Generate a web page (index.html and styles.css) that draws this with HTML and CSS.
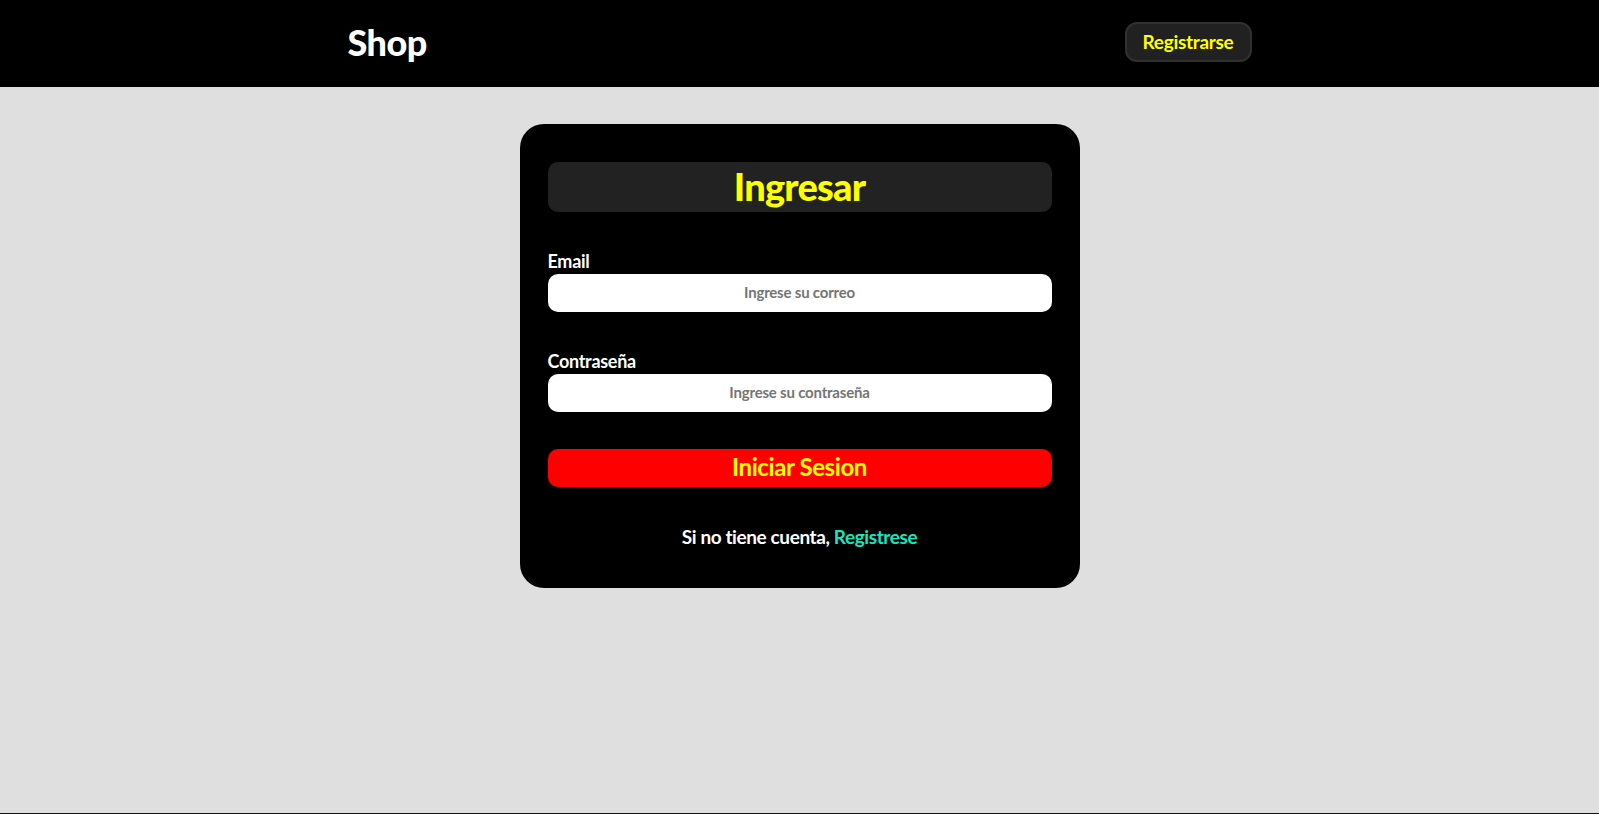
FILE: index.html
```html
<!DOCTYPE html>
<html lang="es">
<head>
<meta charset="utf-8">
<title>Shop - Ingresar</title>
<link rel="stylesheet" href="styles.css">
</head>
<body>
<header class="topbar">
  <div class="topbar-inner">
    <a class="brand" href="#">Shop</a>
    <a class="nav-btn" href="#">Registrarse</a>
  </div>
</header>
<main class="main">
  <form class="card">
    <h1 class="card-title">Ingresar</h1>
    <div class="field">
      <label class="field-label" for="email">Email</label>
      <input class="field-input" id="email" type="email" placeholder="Ingrese su correo">
    </div>
    <div class="field">
      <label class="field-label" for="pass">Contraseña</label>
      <input class="field-input" id="pass" type="password" placeholder="Ingrese su contraseña">
    </div>
    <button class="submit" type="button">Iniciar Sesion</button>
    <p class="signup">Si no tiene cuenta, <a class="signup-link" href="#">Registrese</a></p>
  </form>
</main>
<footer class="footer"></footer>
</body>
</html>
```
FILE: styles.css
```css
* { box-sizing: border-box; }
html, body { margin: 0; padding: 0; }
body {
  background: #dfdfdf;
  font-family: Lato, "Noto Sans", "Liberation Sans", sans-serif;
  font-weight: 700;
}
.topbar {
  background: #000;
  height: 87px;
  padding-bottom: 3px;
}
.topbar-inner {
  width: 904px;
  margin: 0 auto;
  height: 100%;
  display: flex;
  align-items: center;
  justify-content: space-between;
}
.brand {
  color: #fff;
  text-decoration: none;
  font-size: 36px;
  font-weight: 900;
  letter-spacing: -0.5px;
  line-height: 1;
}
.nav-btn {
  display: flex;
  align-items: center;
  justify-content: center;
  width: 127px;
  height: 40px;
  background: #212121;
  border: 2px solid #303030;
  border-radius: 12px;
  color: #ffff00;
  text-decoration: none;
  font-size: 19px;
  font-weight: 700;
  letter-spacing: -0.3px;
  padding-bottom: 2px;
}
.main {
  height: 726px;
  padding-top: 37px;
  display: flex;
  justify-content: center;
  align-items: flex-start;
}
.card {
  width: 560px;
  background: #000;
  border-radius: 24px;
  padding: 38px 28px 39px;
  display: flex;
  flex-direction: column;
}
.card-title {
  margin: 0 0 39px;
  height: 50px;
  background: #222;
  border-radius: 10px;
  color: #ffff00;
  font-size: 38px;
  font-weight: 900;
  letter-spacing: -0.8px;
  line-height: 48px;
  text-align: center;
}
.field {
  display: flex;
  flex-direction: column;
  gap: 3px;
  margin-bottom: 39px;
}
.field + .field { margin-bottom: 37px; }
.field-label {
  color: #fff;
  font-size: 18px;
  line-height: 20px;
  letter-spacing: -0.3px;
}
.field-input {
  height: 38px;
  border: none;
  border-radius: 10px;
  background: #fff;
  text-align: center;
  font-family: inherit;
  font-weight: 700;
  font-size: 15px;
  letter-spacing: -0.2px;
  color: #333;
  outline: none;
  padding: 0 0 3px;
}
.field-input::placeholder { color: #757575; }
.submit {
  height: 38px;
  border: none;
  border-radius: 10px;
  background: #ff0000;
  color: #ffff00;
  font-family: inherit;
  font-weight: 700;
  font-size: 24px;
  letter-spacing: -0.4px;
  cursor: pointer;
  margin-bottom: 38px;
  padding: 0 0 3px;
}
.signup {
  margin: 0;
  color: #fff;
  font-size: 19px;
  line-height: 24px;
  letter-spacing: -0.4px;
  text-align: center;
}
.signup-link {
  color: #14e8c2;
  text-decoration: none;
}
.footer {
  height: 60px;
  background: #111;
}
```
